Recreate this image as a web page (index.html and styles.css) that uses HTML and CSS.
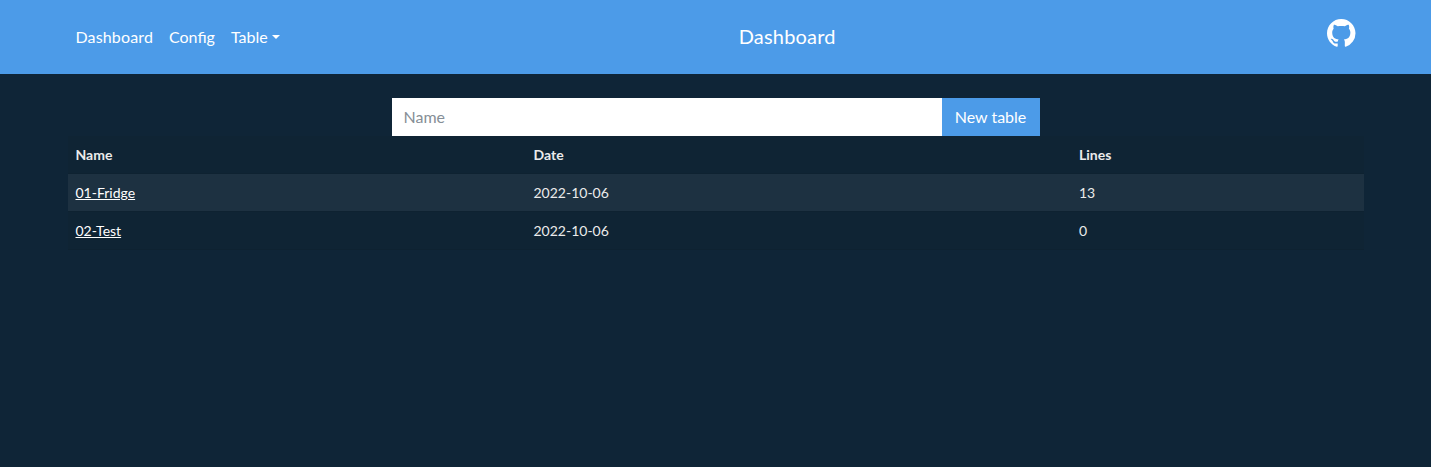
FILE: index.html
```html
<!DOCTYPE html>
<html lang="en">
<head>
<meta charset="utf-8">
<title>Dashboard</title>
<link rel="stylesheet" href="styles.css">
</head>
<body>
<header class="navbar">
  <div class="container navbar-inner">
    <nav class="nav">
      <a class="nav-link nav-home" href="#">Dashboard</a>
      <a class="nav-link" href="#">Config</a>
      <a class="nav-link dropdown" href="#">Table</a>
    </nav>
    <span class="brand">Dashboard</span>
    <a class="github" href="#" aria-label="GitHub">
      <svg width="28.5" height="28.5" viewBox="0 0 16 16" fill="currentColor"><path d="M8 0C3.58 0 0 3.58 0 8c0 3.54 2.29 6.53 5.47 7.59.4.07.55-.17.55-.38 0-.19-.01-.82-.01-1.49-2.01.37-2.53-.49-2.69-.94-.09-.23-.48-.94-.82-1.13-.28-.15-.68-.52-.01-.53.63-.01 1.08.58 1.23.82.72 1.21 1.87.87 2.33.66.07-.52.28-.87.51-1.07-1.78-.2-3.64-.89-3.64-3.95 0-.87.31-1.59.82-2.15-.08-.2-.36-1.02.08-2.12 0 0 .67-.21 2.2.82.64-.18 1.32-.27 2-.27.68 0 1.36.09 2 .27 1.53-1.04 2.2-.82 2.2-.82.44 1.1.16 1.92.08 2.12.51.56.82 1.27.82 2.15 0 3.07-1.87 3.75-3.65 3.95.29.25.54.73.54 1.48 0 1.07-.01 1.93-.01 2.2 0 .21.15.46.55.38A8.012 8.012 0 0 0 16 8c0-4.42-3.58-8-8-8z"/></svg>
    </a>
  </div>
</header>
<main class="container">
  <form class="input-group">
    <input class="name-input" type="text" placeholder="Name">
    <button class="button" type="button">New table</button>
  </form>
  <table class="table">
    <colgroup><col class="col-name"><col class="col-date"><col></colgroup>
    <thead><tr><th>Name</th><th>Date</th><th>Lines</th></tr></thead>
    <tbody>
      <tr class="striped"><td><a href="#">01-Fridge</a></td><td>2022-10-06</td><td>13</td></tr>
      <tr><td><a href="#">02-Test</a></td><td>2022-10-06</td><td>0</td></tr>
    </tbody>
  </table>
</main>
</body>
</html>
```
FILE: styles.css
```css
* { box-sizing: border-box; }
body {
  margin: 0;
  min-height: 100vh;
  background: #0f2537;
  color: #ebebeb;
  font: 16px/24px Lato, sans-serif;
}
.container { width: 1296px; margin: 0 auto; }
.navbar { height: 74px; background: #4c9be8; }
.navbar-inner { display: flex; align-items: center; height: 100%; }
.nav { display: flex; }
.nav-link { padding: 8px; color: #fff; text-decoration: none; }
.nav-home { letter-spacing: 0.14px; }
.dropdown::after {
  content: "";
  display: inline-block;
  margin-left: 4px;
  vertical-align: 4px;
  border: 4.8px solid transparent;
  border-top-color: #fff;
  border-bottom: 0;
}
.brand {
  margin: 0 auto 2px 451px;
  color: #fff;
  font-size: 20px;
  line-height: 30px;
  letter-spacing: 0.2px;
}
.github { display: flex; padding: 0 8px 8px; color: #fff; }
.input-group { display: flex; width: 648px; margin: 24px auto 0; }
.name-input {
  flex: 1;
  min-width: 0;
  height: 38px;
  padding: 5px 12px 7px;
  border: 0;
  border-radius: 0;
  background: #fff;
  color: #212529;
  font: inherit;
}
.name-input::placeholder { color: #868e96; opacity: 1; }
.button {
  width: 98px;
  padding: 6px 0;
  border: 0;
  background: #4c9be8;
  color: #fff;
  font: inherit;
}
.table {
  width: 100%;
  table-layout: fixed;
  border-spacing: 0;
  background: #0f2434;
  font-size: 14px;
  line-height: 21px;
}
.col-name { width: 458px; }
.col-date { width: 545.5px; }
.table th, .table td {
  height: 38px;
  padding: 8px;
  border-bottom: 1px solid #0e2231;
  text-align: left;
  vertical-align: top;
}
.table .striped td { background: #1d3141; }
.table a { color: #fff; }
```
